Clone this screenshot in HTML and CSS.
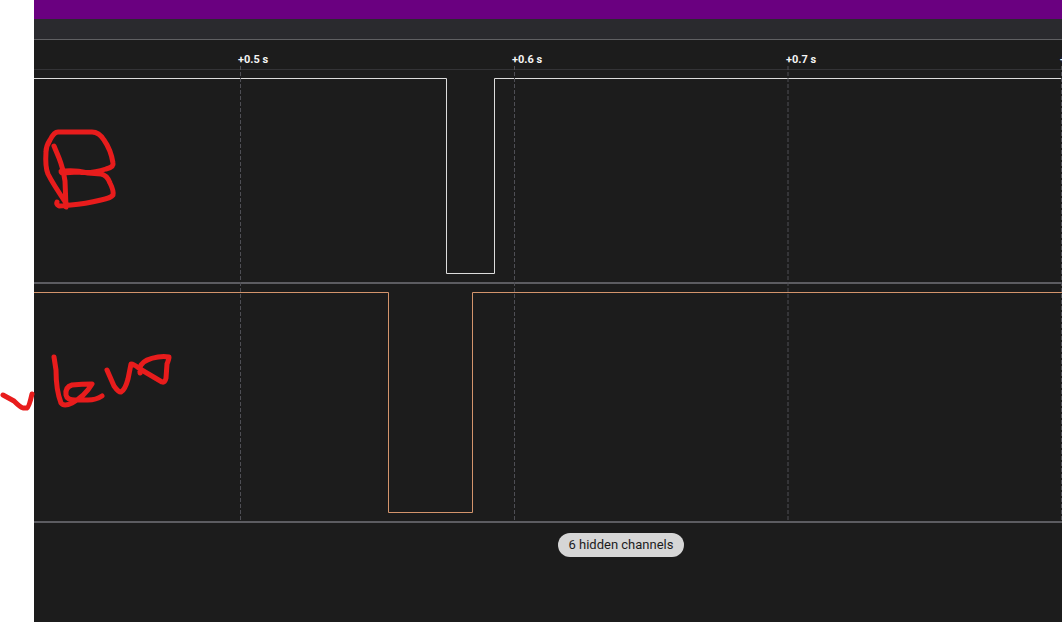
FILE: index.html
```html
<!DOCTYPE html>
<html lang="en">
<head>
<meta charset="utf-8">
<title>Logic capture</title>
<link rel="stylesheet" href="styles.css">
</head>
<body>
<main class="analyzer">
  <div class="title-bar"></div>
  <div class="toolbar"></div>
  <section class="timeline">
    <div class="ruler">
      <span class="tick">+0.5 s</span>
      <span class="tick">+0.6 s</span>
      <span class="tick">+0.7 s</span>
      <span class="tick">+0.8 s</span>
    </div>
    <svg class="grid-lines" aria-hidden="true">
      <path d="M206.5 0V455M480.5 0V455M754 0V455M1027.5 0V455"/>
    </svg>
    <div class="channel">
      <svg class="wave wave-white" aria-label="Channel B">
        <path d="M-2 8.5H412.5V203.5H460.5V8.5H4000"/>
      </svg>
    </div>
    <div class="channel channel-tall">
      <svg class="wave wave-orange" aria-label="Channel A">
        <path d="M-2 8.5H354.5V228.5H438.5V8.5H4000"/>
      </svg>
    </div>
  </section>
  <footer class="footer">
    <button class="hidden-channels" type="button">6 hidden channels</button>
  </footer>
</main>
<svg class="ink" width="180" height="420" aria-hidden="true">
  <path d="M54 146L59 158Q63 168 65 181L66 207M66 203Q53 184 48 174Q45 167 46 152Q46 146 50 140Q54 132 58 132L92 132Q99 132 104 140Q111 150 113 163Q114 167 106 169Q91 174 78 172L62 173Q59 170 65 171Q75 170 88 173L101 174Q107 175 110 183Q114 191 113 195Q111 198 101 200Q85 204 71 205L59 206Q56 204 57 202"/>
  <path d="M3 395L14 401Q20 407 23 408L27 408Q29 407 32 394"/>
  <path d="M54 357L56 370Q56 390 61 403Q64 407 72 403Q85 396 92 384Q82 384 72 385Q65 387 66 395Q67 400 75 400L88 400Q96 400 102 396"/>
  <path d="M107 370L114 386Q119 393 121 392Q125 390 128 379L131 364Q134 364 140 369L162 382Q165 383 166 378L167 364Q169 359 169 357Q164 356 158 357Q145 359 141 365Q139 369 140 373"/>
</svg>
</body>
</html>
```
FILE: styles.css
```css
* {
  box-sizing: border-box;
}

body {
  margin: 0;
  padding-left: 34px;
  background: #fff;
  font-family: Roboto, "Liberation Sans", sans-serif;
}

.analyzer {
  display: flex;
  flex-direction: column;
  min-height: 100vh;
  overflow: hidden;
  background: #1c1c1c;
}

.title-bar {
  height: 19px;
  background: #6a0080;
}

.toolbar {
  height: 21px;
  background: #2a2a2e;
  border-bottom: 1px solid #606063;
}

.timeline {
  position: relative;
}

.ruler {
  display: flex;
  height: 30px;
  padding: 12px 0 0 204px;
  border-bottom: 1px solid #333336;
}

.tick {
  flex: 0 0 274px;
  font-size: 11px;
  font-weight: 700;
  line-height: 16px;
  color: #f4f4f4;
}

.grid-lines {
  position: absolute;
  top: 26px;
  left: 0;
  width: 100%;
  height: 455px;
  fill: none;
  stroke: #4e4e54;
  stroke-width: 1;
  stroke-dasharray: 4 2;
}

.channel {
  height: 214px;
  border-bottom: 2px solid #5c5c61;
}

.channel-tall {
  height: 239px;
}

.wave {
  display: block;
  width: 100%;
  height: 100%;
  fill: none;
  stroke-width: 1;
}

.wave-white {
  stroke: #dcdcdc;
}

.wave-orange {
  stroke: #d3946c;
}

.footer {
  display: flex;
  justify-content: center;
  padding: 10px 0 10px 146px;
}

.hidden-channels {
  height: 24px;
  padding: 0 11px;
  border: 0;
  border-radius: 12px;
  background: #d6d6d6;
  color: #1c1c1c;
  font-family: inherit;
  font-size: 13px;
  line-height: 24px;
}

.ink {
  position: absolute;
  top: 0;
  left: 0;
  fill: none;
  stroke: #e81c1c;
  stroke-width: 5;
  stroke-linecap: round;
  stroke-linejoin: round;
}
```
